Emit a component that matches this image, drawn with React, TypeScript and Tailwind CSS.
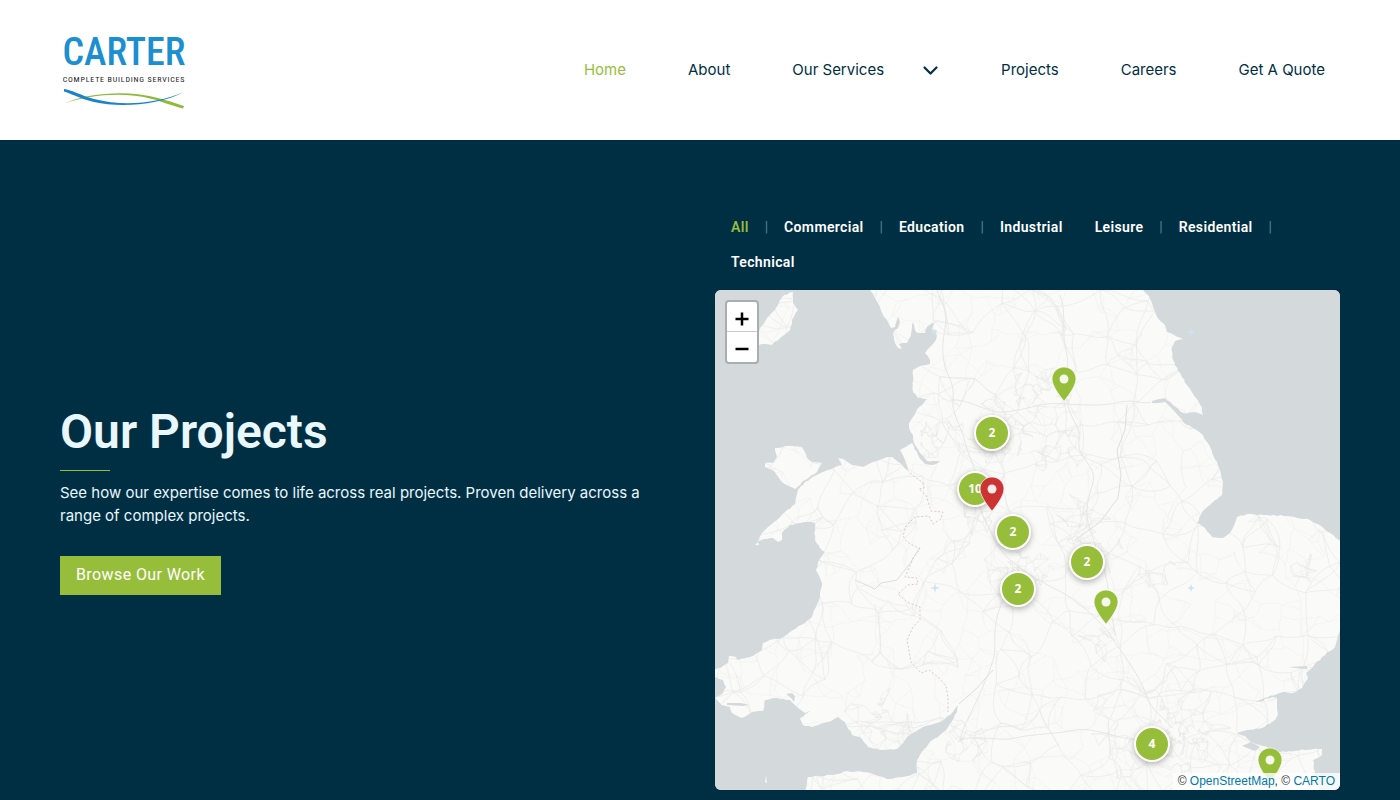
import React, { useState } from 'react';

type Point = [number, number];

interface Marker {
  kind: 'cluster' | 'pin';
  x: number;
  y: number;
  count?: number;
  color?: string;
}

const MAP_WIDTH = 625;
const MAP_HEIGHT = 500;

const navBefore = ['Home', 'About'];
const navAfter = ['Projects', 'Careers', 'Get A Quote'];

const filters = [
  { name: 'All', divider: true },
  { name: 'Commercial', divider: true },
  { name: 'Education', divider: true },
  { name: 'Industrial', divider: false },
  { name: 'Leisure', divider: true },
  { name: 'Residential', divider: true },
  { name: 'Technical', divider: false },
];

const markers: Marker[] = [
  { kind: 'pin', x: 349, y: 112, color: '#97be3b' },
  { kind: 'cluster', x: 277, y: 143, count: 2 },
  { kind: 'cluster', x: 260, y: 199, count: 10 },
  { kind: 'pin', x: 277, y: 222, color: '#cc3333' },
  { kind: 'cluster', x: 298, y: 242, count: 2 },
  { kind: 'cluster', x: 372, y: 272, count: 2 },
  { kind: 'cluster', x: 303, y: 299, count: 2 },
  { kind: 'pin', x: 391, y: 335, color: '#97be3b' },
  { kind: 'cluster', x: 437, y: 454, count: 4 },
  { kind: 'pin', x: 555, y: 493, color: '#97be3b' },
];

// Coast of England and Wales, clockwise from the top right
const mainland: Point[] = [
  [428, 0], [434, 6], [438, 17], [442, 27], [450, 35], [452, 42], [459, 45], [468, 49], [460, 51], [457, 57],
  [458, 70], [463, 81], [472, 95], [480, 107], [487, 117], [488, 125], [480, 122], [468, 123], [458, 115],
  [450, 108], [437, 111], [437, 113], [450, 112], [460, 122], [468, 132], [478, 138], [488, 145], [492, 152],
  [502, 172], [508, 192], [507, 205], [497, 213], [487, 222], [482, 233], [490, 238], [497, 247], [508, 248],
  [515, 243], [518, 238], [522, 227], [532, 224], [552, 225], [572, 226], [595, 230], [606, 236], [615, 243],
  [626, 252], [626, 330], [624, 343], [622, 350], [620, 357], [607, 367], [597, 378], [591, 383], [593, 388],
  [587, 398], [578, 403], [568, 402], [553, 407], [545, 411], [558, 407], [562, 408], [562, 418], [563, 425],
  [560, 430], [547, 438], [532, 440], [522, 443], [530, 446], [536, 452], [545, 455], [565, 462], [590, 460],
  [607, 459], [607, 465], [598, 470], [600, 482], [604, 501], [90, 501], [93, 487], [118, 485], [132, 481],
  [155, 483], [172, 489], [188, 487], [202, 483], [202, 470], [207, 462], [215, 452], [225, 445], [233, 437],
  [242, 422], [243, 415], [235, 425], [225, 432], [208, 437], [192, 447], [188, 453], [182, 459], [168, 460],
  [153, 457], [145, 447], [137, 445], [130, 432], [123, 427], [113, 432], [97, 437], [88, 435], [85, 428],
  [95, 421], [90, 423], [83, 418], [75, 410], [62, 408], [50, 410], [48, 421], [37, 422], [27, 428],
  [17, 423], [15, 417], [7, 415], [0, 408], [8, 403], [11, 397], [8, 390], [0, 387], [-1, 380], [5, 378],
  [13, 373], [14, 366], [21, 367], [22, 370], [35, 367], [47, 360], [48, 353], [55, 350], [67, 348],
  [78, 340], [90, 333], [97, 327], [101, 317], [105, 307], [107, 293], [105, 288], [101, 280], [103, 272],
  [110, 262], [105, 258], [100, 250], [100, 240], [100, 233], [90, 232], [85, 233], [75, 235], [67, 243],
  [67, 250], [63, 252], [58, 248], [52, 249], [43, 251], [47, 243], [53, 237], [62, 230], [70, 222],
  [80, 214], [81, 208], [83, 200], [90, 192], [102, 185], [113, 180], [127, 175], [123, 168], [128, 169],
  [137, 175], [148, 177], [158, 172], [172, 167], [177, 167], [187, 175], [195, 183], [190, 170], [185, 160],
  [197, 153], [203, 165], [210, 174], [218, 175], [225, 171], [212, 171], [205, 163], [199, 153], [198, 145],
  [194, 138], [194, 133], [198, 127], [203, 118], [212, 109], [203, 108], [198, 102], [198, 80], [203, 77],
  [215, 74], [215, 70], [210, 63], [215, 57], [221, 50], [222, 45], [217, 40], [220, 32], [212, 37],
  [210, 43], [201, 42], [198, 32], [197, 38], [196, 45], [192, 53], [184, 54], [187, 59], [183, 58],
  [179, 50], [178, 43], [183, 38], [185, 32], [183, 27], [180, 37], [176, 38], [172, 30], [167, 23],
  [165, 17], [158, 4], [155, 0],
];

const isleOfMan: Point[] = [
  [78, 2], [67, 7], [63, 15], [55, 25], [45, 38], [42, 48], [44, 55], [50, 54], [57, 55], [65, 48], [75, 40],
  [77, 30], [83, 20], [78, 13],
];

const anglesey: Point[] = [
  [60, 158], [73, 156], [87, 157], [92, 168], [97, 172], [107, 173], [102, 182], [90, 190], [80, 199],
  [67, 192], [60, 182], [50, 177], [50, 173], [58, 173], [62, 167],
];

const border: Point[] = [
  [195, 183], [208, 193], [209, 198], [204, 199], [211, 205], [216, 221], [228, 222], [226, 229], [218, 234],
  [214, 226], [200, 227], [191, 236], [188, 246], [192, 252], [205, 259], [198, 268], [194, 278], [190, 287],
  [202, 288], [203, 294], [193, 295], [183, 304], [192, 312], [205, 317], [205, 330], [198, 337], [192, 350],
  [196, 372], [206, 383], [214, 380], [224, 388], [231, 396], [233, 408], [233, 422],
];

// x, y, radius of the dense street network, number of junctions
const cities = [
  [283, 140, 36, 85],
  [218, 145, 24, 45],
  [325, 105, 32, 70],
  [345, 162, 28, 34],
  [368, 228, 28, 38],
  [302, 278, 34, 85],
  [262, 226, 22, 22],
  [465, 445, 34, 150],
  [445, 445, 75, 90],
  [248, 450, 24, 38],
  [165, 428, 38, 40],
  [385, 262, 24, 20],
  [385, 350, 24, 20],
  [592, 277, 18, 14],
  [447, 285, 20, 12],
];

function createRandom(seed: number) {
  let s = seed;
  return () => {
    s = (s * 16807) % 2147483647;
    return s / 2147483647;
  };
}

// Adds small bays and headlands between the coast points
function roughen(points: Point[], seed: number) {
  const random = createRandom(seed);
  const out: string[] = [];
  points.forEach((p, i) => {
    const q = points[(i + 1) % points.length];
    const length = Math.hypot(q[0] - p[0], q[1] - p[1]);
    out.push(p.join(' '));
    if (length > 60) return;
    const steps = Math.floor(length / 3);
    for (let k = 1; k < steps; k++) {
      const t = k / steps;
      const x = p[0] + (q[0] - p[0]) * t + (random() - 0.5) * 1.3;
      const y = p[1] + (q[1] - p[1]) * t + (random() - 0.5) * 1.3;
      out.push(`${x.toFixed(1)} ${y.toFixed(1)}`);
    }
  });
  return `M${out.join('L')}Z`;
}

// Joins every junction to its nearest neighbours, each pair once
function buildRoads(nodes: Point[], links: number, seed: number) {
  const random = createRandom(seed);
  const done = new Set<string>();
  let d = '';
  nodes.forEach((p, i) => {
    const near = nodes
      .map((q, j) => ({ q, j, length: Math.hypot(q[0] - p[0], q[1] - p[1]) }))
      .filter((n) => n.j !== i)
      .sort((a, b) => a.length - b.length)
      .slice(0, links);
    near.forEach(({ q, j, length }) => {
      const key = `${Math.min(i, j)}-${Math.max(i, j)}`;
      if (done.has(key)) return;
      done.add(key);
      const bend = () => (random() - 0.5) * length * 0.4;
      const dx = q[0] - p[0];
      const dy = q[1] - p[1];
      const c1 = [p[0] + dx / 3 + bend(), p[1] + dy / 3 + bend()].map((n) => n.toFixed(1));
      const c2 = [p[0] + (dx * 2) / 3 + bend(), p[1] + (dy * 2) / 3 + bend()].map((n) => n.toFixed(1));
      d += `M${p[0].toFixed(1)} ${p[1].toFixed(1)}C${c1.join(' ')} ${c2.join(' ')} ${q[0].toFixed(1)} ${q[1].toFixed(1)}`;
    });
  });
  return d;
}

function scatter(step: number, seed: number) {
  const random = createRandom(seed);
  const nodes: Point[] = [];
  for (let y = 0; y <= MAP_HEIGHT + step; y += step) {
    for (let x = 0; x <= MAP_WIDTH + step; x += step) {
      nodes.push([x + (random() - 0.5) * step * 1.2, y + (random() - 0.5) * step * 1.2]);
    }
  }
  return nodes;
}

function scatterCities(seed: number) {
  const random = createRandom(seed);
  const nodes: Point[] = [];
  cities.forEach(([x, y, radius, count]) => {
    for (let i = 0; i < count; i++) {
      const angle = random() * Math.PI * 2;
      const r = radius * Math.pow(random(), 0.8);
      nodes.push([x + Math.cos(angle) * r, y + Math.sin(angle) * r]);
    }
  });
  return nodes;
}

const landPath = [roughen(mainland, 11), roughen(isleOfMan, 23), roughen(anglesey, 37)].join('');
const mainRoads = buildRoads(scatter(30, 91), 4, 5);
const minorRoads = buildRoads(scatter(17, 417), 3, 8);
const cityRoads = buildRoads(scatterCities(77), 3, 13);

const Logo: React.FC = () => (
  <a href="#" aria-label="Carter Complete Building Services" className="block">
    <svg width="128" height="80" viewBox="0 0 128 80">
      <text
        x="64"
        y="35"
        textAnchor="middle"
        fill="#1b8fd0"
        className="font-['Roboto_Condensed','Open_Sans_Condensed','Liberation_Sans_Narrow','Roboto',sans-serif] text-[38px] font-medium"
      >
        CARTER
      </text>
      <text
        x="64"
        y="52"
        textAnchor="middle"
        fill="#222222"
        className="font-['Roboto_Condensed','Open_Sans_Condensed','Liberation_Sans_Narrow','Roboto',sans-serif] text-[8px] tracking-widest"
      >
        COMPLETE BUILDING SERVICES
      </text>
      <path d="M4 73.5C30 62 70 60 98 68C110 71 120 75 124 76L123 78.500C110 75 100 71 92 69C65 62 32 64 4 73.500Z" fill="#8dba3a" />
      <path d="M4 59C12 60 20 65 34 69C65 77 98 73 124 62C100 75 60 78 34 72C18 68 10 63 4 61.500Z" fill="#1b84c8" />
    </svg>
  </a>
);

const MapBackground: React.FC = () => (
  <svg
    className="block h-full w-full"
    viewBox={`0 0 ${MAP_WIDTH} ${MAP_HEIGHT}`}
    preserveAspectRatio="xMidYMid slice"
    aria-hidden="true"
  >
    <defs>
      <clipPath id="land">
        <path d={landPath} />
      </clipPath>
    </defs>
    <rect width={MAP_WIDTH} height={MAP_HEIGHT} fill="#d4dadc" />
    <path d={landPath} fill="#fafaf8" />
    <g clipPath="url(#land)" fill="none">
      <path d={minorRoads} stroke="#f2f2f1" strokeWidth="0.7" />
      <path d={cityRoads} stroke="#e9e9eb" strokeWidth="0.6" />
      <path d={mainRoads} stroke="#e9e9e9" strokeWidth="0.7" />
      {/* Motorways */}
      <path
        d="M222 0C226 12 233 20 231 32S226 58 229 72S240 94 238 108S246 136 250 152S264 184 263 202S272 232 278 246S292 268 302 276S334 296 346 302S386 330 396 346S424 384 430 402S444 424 452 432M345 5C352 24 346 42 351 60S348 98 353 116S366 136 364 152S382 176 378 192S370 216 373 232S388 270 392 292S396 330 401 345M245 450C262 444 284 452 300 448S342 444 360 440S410 452 430 450M298 285C292 300 284 316 281 332S282 356 278 370S268 396 262 410S248 436 245 450M235 110C254 108 272 124 290 122S318 116 332 114S380 118 400 113S426 115 436 112"
        stroke="#e4e4e5"
        strokeWidth="0.9"
        strokeLinejoin="round"
      />
      {/* Trent and Severn */}
      <path d="M412 115L410 140L402 160L406 185L403 208L385 232L360 250M244 414L262 398L278 380M140 290L160 299L166 293L182 290L196 272L205 257" stroke="#dcdfe0" strokeWidth="1" />
    </g>
    <path d={`M${border.map((p) => p.join(' ')).join('L')}`} fill="none" stroke="#dcc9cc" strokeWidth="1" strokeDasharray="2 2" />
    <g fill="#d4dadc">
      <path d="M77 403L80 406L79 412L76 408L71 404Z" />
      <path d="M12 413L26 413L34 415L28 416L12 415Z" />
      <path d="M540 412L552 407L548 411Z" />
      <path d="M574 377L592 376L592 379L580 378Z" />
      <path d="M527 456L536 452L545 457L540 461Z" />
    </g>
    <g fill="#fafaf8">
      <path d="M51 486L52 493L50 492Z" />
      <path d="M40 255L43 252L44 255Z" />
    </g>
    <g fill="#cfe3ec">
      <path d="M476 38L477 41L480 42L477 43L476 46L475 43L472 42L475 41Z" />
      <path d="M220 293L221 297L225 298L221 299L220 303L219 299L215 298L219 297Z" />
      <path d="M476 294L477 297L480 298L477 299L476 302L475 299L472 298L475 297Z" />
      <path d="M218 39L222 41L220 45L216 42Z" />
    </g>
  </svg>
);

const MapMarker: React.FC<{ marker: Marker }> = ({ marker }) => {
  const position = {
    left: `${(marker.x / MAP_WIDTH) * 100}%`,
    top: `${(marker.y / MAP_HEIGHT) * 100}%`,
  };

  if (marker.kind === 'cluster') {
    return (
      <button
        style={position}
        className="absolute flex h-9 w-9 -translate-x-1/2 -translate-y-1/2 items-center justify-center rounded-full border-2 border-white bg-[#97be3b] font-['Open_Sans',sans-serif] text-xs font-bold text-white shadow-[0_2px_6px_rgba(0,0,0,0.3)]"
      >
        {marker.count}
      </button>
    );
  }

  return (
    <button style={position} aria-label="Project" className="absolute -translate-x-1/2 -translate-y-full">
      <svg width="26" height="36" viewBox="0 0 26 36" className="block">
        <path
          d="M13 1C6.400 1 1 6.400 1 13C1 21.500 13 35 13 35C13 35 25 21.500 25 13C25 6.400 19.600 1 13 1Z"
          fill={marker.color}
          stroke="#ffffff"
          strokeOpacity="0.7"
          strokeWidth="1"
        />
        <circle cx="13" cy="13" r="4.500" fill="#ffffff" fillOpacity="0.9" />
      </svg>
    </button>
  );
};

const App: React.FC = () => {
  const [activeFilter, setActiveFilter] = useState('All');

  return (
    <div className="min-h-screen bg-[#002f43] font-['Inter',sans-serif]">
      <header className="flex h-[140px] items-center justify-between bg-white pr-[75px] pl-[60px]">
        <Logo />
        <nav className="flex items-center gap-[62px] text-[15px] text-[#002f43]">
          {navBefore.map((item) => (
            <a key={item} href="#" className={item === 'Home' ? 'text-[#97be3b]' : ''}>
              {item}
            </a>
          ))}
          <a href="#" className="flex items-center gap-[38px]">
            Our Services
            <svg width="17" height="17" viewBox="0 0 17 17" fill="none" stroke="currentColor" strokeWidth="2.200" strokeLinecap="round" strokeLinejoin="round">
              <path d="M2.500 5.500L8.500 11.500L14.500 5.500" />
            </svg>
          </a>
          {navAfter.map((item) => (
            <a key={item} href="#">
              {item}
            </a>
          ))}
        </nav>
      </header>

      <section className="grid grid-cols-[595fr_625fr] items-center gap-[60px] px-[60px] py-[70px]">
        <div className="pt-[2px]">
          <h1 className="font-['Roboto',sans-serif] text-5xl leading-[48px] font-semibold text-[#e9f7ff]">Our Projects</h1>
          <div className="mt-[14px] h-px w-[50px] bg-[#97be3b]" />
          <p className="mt-[10px] text-[15px] leading-[23px] text-[#e9f7ff]">
            See how our expertise comes to life across real projects. Proven delivery across a range of complex projects.
          </p>
          <button className="mt-[29px] h-[39px] bg-[#97be3b] px-4 font-['Roboto',sans-serif] text-base tracking-wide text-white">
            Browse Our Work
          </button>
        </div>

        <div>
          {/* Category filters */}
          <div className="mb-[10px] flex flex-wrap items-center font-['Roboto',sans-serif] text-sm leading-[35px] font-semibold">
            {filters.map((filter) => (
              <React.Fragment key={filter.name}>
                <button
                  onClick={() => setActiveFilter(filter.name)}
                  className={`px-4 tracking-wide ${activeFilter === filter.name ? 'text-[#97be3b]' : 'text-white'}`}
                >
                  {filter.name}
                </button>
                {filter.divider && <span className="font-normal text-[#55808f]">|</span>}
              </React.Fragment>
            ))}
          </div>

          <div className="relative h-[500px] overflow-hidden rounded-md bg-[#d4dadc]">
            <MapBackground />
            {markers.map((marker) => (
              <MapMarker key={`${marker.x}-${marker.y}`} marker={marker} />
            ))}

            {/* Zoom control */}
            <div className="absolute top-[10px] left-[10px] rounded-sm border-2 border-[#a9aeb0] bg-white">
              <button aria-label="Zoom in" className="flex h-[30px] w-[30px] items-center justify-center border-b border-[#cccccc] pt-1">
                <svg width="14" height="14" viewBox="0 0 14 14" stroke="#000000" strokeWidth="2.500">
                  <path d="M7 0.500V13.500M0.500 7H13.500" />
                </svg>
              </button>
              <button aria-label="Zoom out" className="flex h-[30px] w-[30px] items-center justify-center pt-1">
                <svg width="14" height="14" viewBox="0 0 14 14" stroke="#000000" strokeWidth="2.500">
                  <path d="M0.500 7H13.500" />
                </svg>
              </button>
            </div>

            <div className="absolute right-0 bottom-0 bg-white/80 px-[5px] font-['Liberation_Sans',sans-serif] text-xs leading-[17px] text-[#333333]">
              © <a href="#" className="text-[#0078a8]">OpenStreetMap</a>, © <a href="#" className="text-[#0078a8]">CARTO</a>
            </div>
          </div>
        </div>
      </section>
    </div>
  );
};

export default App;
